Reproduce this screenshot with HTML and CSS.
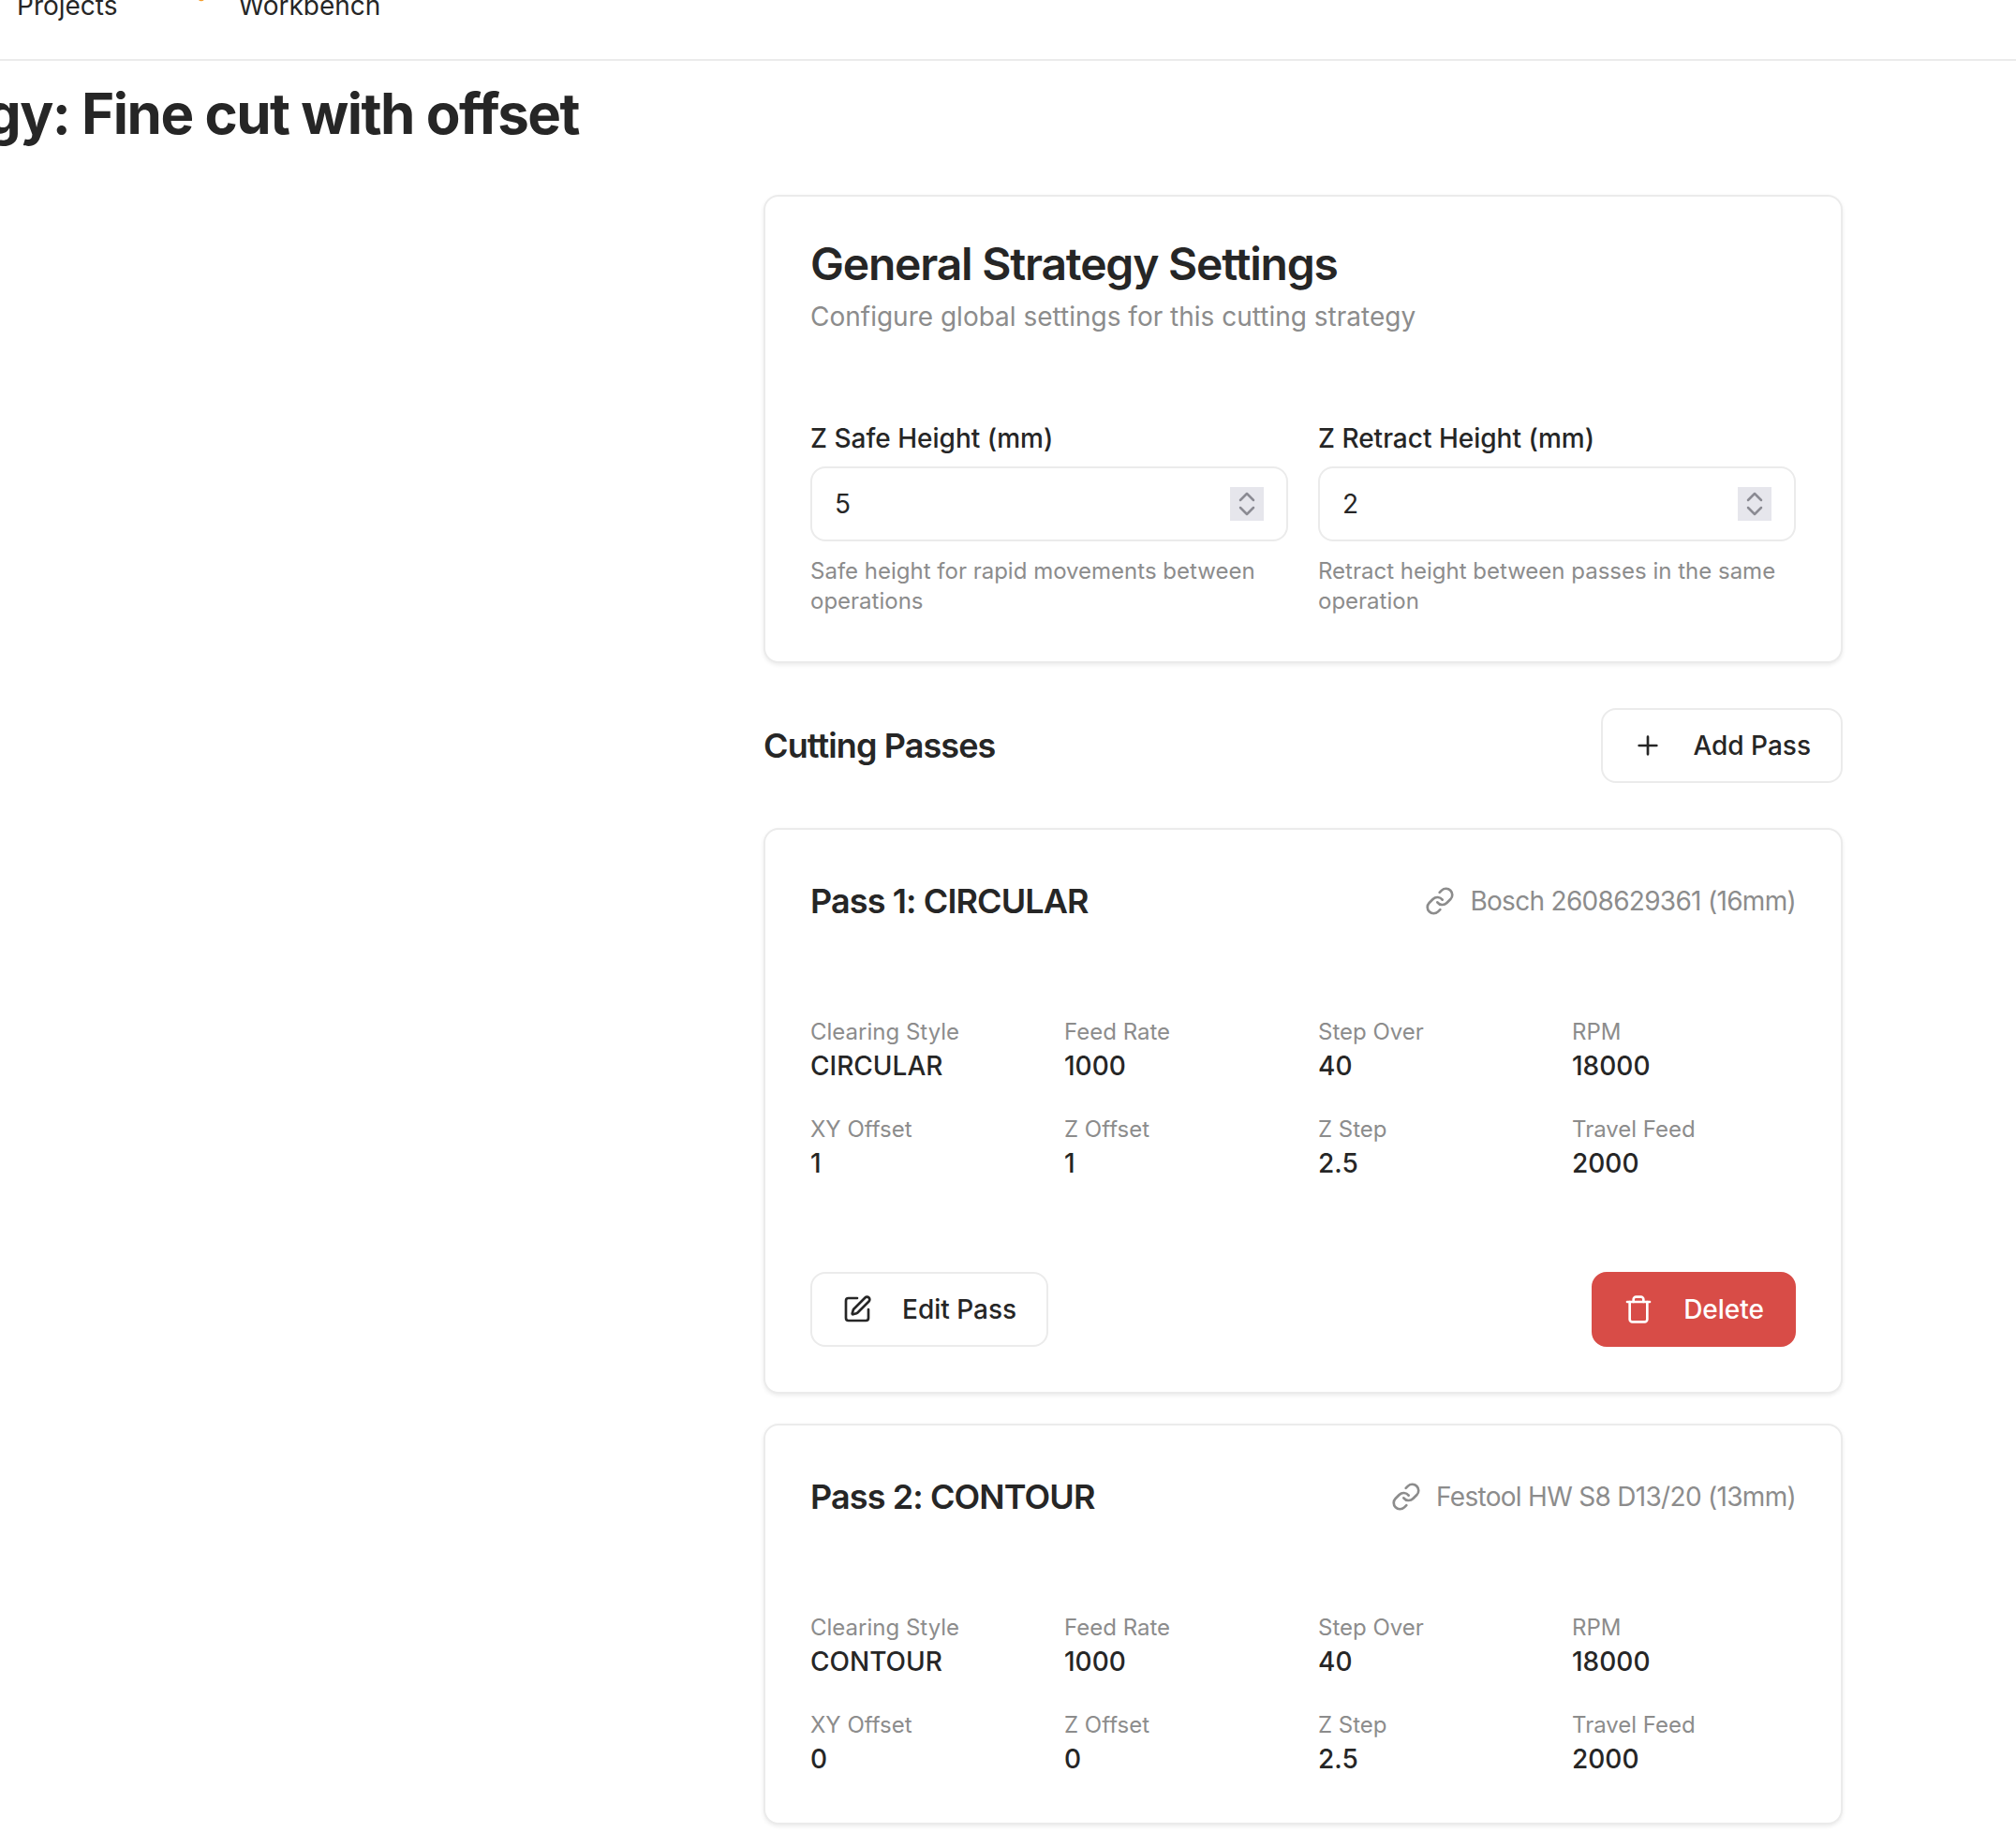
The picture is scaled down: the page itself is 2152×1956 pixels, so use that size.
FILE: index.html
```html
<!DOCTYPE html>
<html lang="en">
<head>
    <meta charset="UTF-8">
    <meta name="viewport" content="width=device-width, initial-scale=1.0">
    <title>Strategy: Fine cut with offset</title>
    <link rel="stylesheet" href="styles.css">
</head>
<body>
    <div class="page">
        <!-- top nav, the page is scrolled so only the lower part shows -->
        <header class="top-nav">
            <a class="nav-item">Projects</a>
            <a class="nav-item">
                <svg class="icon nav-icon" viewBox="0 0 24 24"><path d="M14.7 6.3a1 1 0 0 0 0 1.4l1.6 1.6a1 1 0 0 0 1.4 0l3.77-3.77a6 6 0 0 1-7.94 7.94l-6.91 6.91a2.12 2.12 0 0 1-3-3l6.91-6.91a6 6 0 0 1 7.94-7.94l-3.76 3.76z"/></svg>
                Workbench
            </a>
        </header>

        <h1 class="page-title">Strategy: Fine cut with offset</h1>

        <main class="content">
            <section class="card">
                <div class="card-header">
                    <h2 class="card-title">General Strategy Settings</h2>
                    <p class="card-desc">Configure global settings for this cutting strategy</p>
                </div>
                <div class="settings-grid">
                    <div class="field">
                        <label class="field-label">Z Safe Height (mm)</label>
                        <div class="number-input">
                            <span>5</span>
                            <span class="stepper">
                                <svg viewBox="0 0 36 36"><path d="M11 14l7-7 7 7M11 22l7 7 7-7"/></svg>
                            </span>
                        </div>
                        <p class="field-help">Safe height for rapid movements between operations</p>
                    </div>
                    <div class="field">
                        <label class="field-label">Z Retract Height (mm)</label>
                        <div class="number-input">
                            <span>2</span>
                            <span class="stepper">
                                <svg viewBox="0 0 36 36"><path d="M11 14l7-7 7 7M11 22l7 7 7-7"/></svg>
                            </span>
                        </div>
                        <p class="field-help">Retract height between passes in the same operation</p>
                    </div>
                </div>
            </section>

            <div class="section-head">
                <h2 class="section-title">Cutting Passes</h2>
                <button class="btn">
                    <svg class="icon" viewBox="0 0 24 24"><path d="M5 12h14M12 5v14"/></svg>
                    Add Pass
                </button>
            </div>

            <div class="pass-list">
                <!-- pass 1 -->
                <section class="card">
                    <div class="pass-header">
                        <h3 class="pass-title">Pass 1: CIRCULAR</h3>
                        <div class="pass-tool">
                            <svg class="icon" viewBox="0 0 24 24"><path d="M10 13a5 5 0 0 0 7.54.54l3-3a5 5 0 0 0-7.07-7.07l-1.72 1.71"/><path d="M14 11a5 5 0 0 0-7.54-.54l-3 3a5 5 0 0 0 7.07 7.07l1.71-1.71"/></svg>
                            Bosch 2608629361 (16mm)
                        </div>
                    </div>
                    <div class="stats-grid">
                        <div><div class="stat-label">Clearing Style</div><div class="stat-value">CIRCULAR</div></div>
                        <div><div class="stat-label">Feed Rate</div><div class="stat-value">1000</div></div>
                        <div><div class="stat-label">Step Over</div><div class="stat-value">40</div></div>
                        <div><div class="stat-label">RPM</div><div class="stat-value">18000</div></div>
                        <div><div class="stat-label">XY Offset</div><div class="stat-value">1</div></div>
                        <div><div class="stat-label">Z Offset</div><div class="stat-value">1</div></div>
                        <div><div class="stat-label">Z Step</div><div class="stat-value">2.5</div></div>
                        <div><div class="stat-label">Travel Feed</div><div class="stat-value">2000</div></div>
                    </div>
                    <div class="pass-actions">
                        <button class="btn">
                            <svg class="icon" viewBox="0 0 24 24"><path d="M12 3H5a2 2 0 0 0-2 2v14a2 2 0 0 0 2 2h14a2 2 0 0 0 2-2v-7"/><path d="M18.375 2.625a1 1 0 0 1 3 3l-9.013 9.014a2 2 0 0 1-.853.505l-2.873.84a.5.5 0 0 1-.62-.62l.84-2.873a2 2 0 0 1 .506-.852z"/></svg>
                            Edit Pass
                        </button>
                        <button class="btn btn-danger">
                            <svg class="icon" viewBox="0 0 24 24"><path d="M3 6h18"/><path d="M19 6v14c0 1-1 2-2 2H7c-1 0-2-1-2-2V6"/><path d="M8 6V4c0-1 1-2 2-2h4c1 0 2 1 2 2v2"/></svg>
                            Delete
                        </button>
                    </div>
                </section>

                <!-- pass 2 -->
                <section class="card">
                    <div class="pass-header">
                        <h3 class="pass-title">Pass 2: CONTOUR</h3>
                        <div class="pass-tool">
                            <svg class="icon" viewBox="0 0 24 24"><path d="M10 13a5 5 0 0 0 7.54.54l3-3a5 5 0 0 0-7.07-7.07l-1.72 1.71"/><path d="M14 11a5 5 0 0 0-7.54-.54l-3 3a5 5 0 0 0 7.07 7.07l1.71-1.71"/></svg>
                            Festool HW S8 D13/20 (13mm)
                        </div>
                    </div>
                    <div class="stats-grid">
                        <div><div class="stat-label">Clearing Style</div><div class="stat-value">CONTOUR</div></div>
                        <div><div class="stat-label">Feed Rate</div><div class="stat-value">1000</div></div>
                        <div><div class="stat-label">Step Over</div><div class="stat-value">40</div></div>
                        <div><div class="stat-label">RPM</div><div class="stat-value">18000</div></div>
                        <div><div class="stat-label">XY Offset</div><div class="stat-value">0</div></div>
                        <div><div class="stat-label">Z Offset</div><div class="stat-value">0</div></div>
                        <div><div class="stat-label">Z Step</div><div class="stat-value">2.5</div></div>
                        <div><div class="stat-label">Travel Feed</div><div class="stat-value">2000</div></div>
                    </div>
                </section>
            </div>
        </main>
    </div>
</body>
</html>
```

FILE: styles.css
```css
html, body {
    height: 100%;
    overflow: hidden;
}

body {
    margin: 0;
    background: #fff;
    color: #262626;
    font-family: Inter, "Noto Sans", sans-serif;
    font-size: 28px;
    line-height: 40px;
}

h1, h2, h3, p {
    margin: 0;
}

.page {
    margin-top: -14px;
}

.icon {
    width: 32px;
    height: 32px;
    flex-shrink: 0;
    fill: none;
    stroke: currentColor;
    stroke-width: 2;
    stroke-linecap: round;
    stroke-linejoin: round;
}

/* top nav */
.top-nav {
    display: flex;
    gap: 82px;
    height: 77px;
    padding-left: 18px;
    border-bottom: 2px solid #ebebeb;
}

.nav-item {
    display: flex;
    gap: 15px;
    font-weight: 400;
}

.nav-icon {
    color: #f59e2e;
    margin-top: -14px;
}

.page-title {
    margin: 20px 0 0 -183px;
    font-size: 60px;
    line-height: 72px;
    font-weight: 700;
    letter-spacing: -1.5px;
    white-space: nowrap;
}

.content {
    width: 1152px;
    margin: 51px 0 0 815px;
}

/* cards */
.card {
    padding: 48px;
    background: #fff;
    border: 2px solid #ebebeb;
    border-radius: 16px;
    box-shadow: 0 2px 4px rgba(0, 0, 0, 0.08);
}

.card-header {
    margin-bottom: 96px;
}

.card-title {
    font-size: 48px;
    line-height: 48px;
    font-weight: 600;
    letter-spacing: -1.2px;
}

.card-desc {
    margin-top: 12px;
    color: #8c8c8c;
}

.settings-grid {
    display: grid;
    grid-template-columns: 1fr 1fr;
    gap: 32px;
}

.field-label {
    display: block;
    line-height: 28px;
    font-weight: 500;
}

.number-input {
    display: flex;
    align-items: center;
    justify-content: space-between;
    height: 80px;
    box-sizing: border-box;
    margin-top: 16px;
    padding: 0 24px;
    border: 2px solid #ebebeb;
    border-radius: 16px;
}

.stepper {
    width: 36px;
    height: 36px;
    background: #e6e6ec;
}

.stepper svg {
    display: block;
    width: 36px;
    height: 36px;
    fill: none;
    stroke: #8b8b93;
    stroke-width: 2.5;
    stroke-linecap: round;
    stroke-linejoin: round;
}

.field-help {
    margin-top: 16px;
    font-size: 24px;
    line-height: 32px;
    color: #8c8c8c;
}

.section-head {
    display: flex;
    align-items: center;
    justify-content: space-between;
    margin: 48px 0;
}

.section-title {
    font-size: 36px;
    line-height: 40px;
    font-weight: 600;
    letter-spacing: -0.9px;
}

/* buttons */
.btn {
    display: inline-flex;
    align-items: center;
    gap: 32px;
    height: 80px;
    padding: 0 32px;
    background: #fff;
    color: #262626;
    border: 2px solid #ebebeb;
    border-radius: 16px;
    font: inherit;
    font-weight: 500;
}

.btn-danger {
    background: #d84c47;
    border-color: #d84c47;
    color: #fff;
}

/* passes */
.pass-list {
    display: flex;
    flex-direction: column;
    gap: 32px;
}

.pass-header {
    display: flex;
    align-items: center;
    justify-content: space-between;
    height: 56px;
    margin-bottom: 96px;
}

.pass-title {
    font-size: 36px;
    line-height: 56px;
    font-weight: 600;
    letter-spacing: -0.9px;
}

.pass-tool {
    display: flex;
    align-items: center;
    gap: 16px;
    color: #8c8c8c;
    letter-spacing: -0.7px;
}

.stats-grid {
    display: grid;
    grid-template-columns: repeat(4, 1fr);
    gap: 32px;
}

.stat-label {
    font-size: 24px;
    line-height: 32px;
    color: #8c8c8c;
}

.stat-value {
    font-weight: 500;
}

.pass-actions {
    display: flex;
    justify-content: space-between;
    margin-top: 96px;
}
```
